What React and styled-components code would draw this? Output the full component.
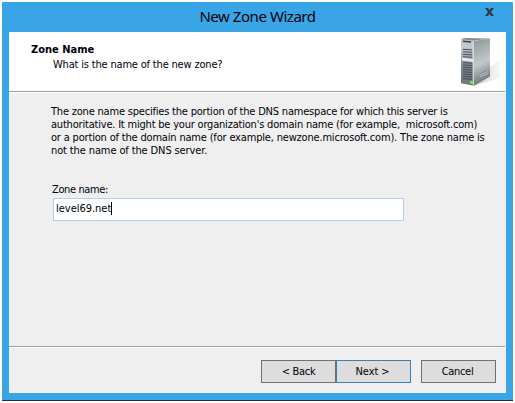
import React from "react";
import styled, { createGlobalStyle } from "styled-components";

const Global = createGlobalStyle`
  * { box-sizing: border-box; }
  body { margin: 0; background: #fff; overflow: hidden; }
`;

const Desktop = styled.div`
  width: 515px;
  height: 403px;
  padding: 2px;
  background: #fff;
`;

const Window = styled.div`
  display: flex;
  flex-direction: column;
  width: 511px;
  height: 399px;
  padding: 0 7px 7px;
  background: #39a5e7;
  border-bottom: 1px solid #2b3038;
  font-family: "DejaVu Sans Condensed", "DejaVu Sans", sans-serif;
  font-stretch: condensed;
  font-size: 11px;
  line-height: 13px;
  color: #000008;
`;

const TitleBar = styled.header`
  display: grid;
  grid-template-columns: 30px 1fr 30px;
  height: 30px;
  flex: none;
`;

const Title = styled.h1`
  grid-column: 2;
  margin: 0;
  padding-top: 4px;
  text-align: center;
  font: 400 15px/20px "Noto Sans", sans-serif;
  letter-spacing: -0.45px;
`;

const CloseButton = styled.button`
  display: flex;
  justify-content: flex-start;
  align-items: flex-start;
  padding: 6px 0 0 9px;
  border: 0;
  background: none;
`;

const Header = styled.section`
  display: flex;
  justify-content: space-between;
  height: 59px;
  flex: none;
  padding: 10px 4px 0 22px;
  background: #fff;
`;

const Divider = styled.div`
  height: 2px;
  flex: none;
  padding-right: 1px;
  background: linear-gradient(#a0a0a0 50%, #fff 50%) content-box, #efefef;

  &::before {
    content: "";
    display: block;
    height: 2px;
  }
`;

const Heading = styled.h2`
  margin: 0;
  font-size: 11px;
  line-height: 15px;
  font-weight: 700;
`;

const Line = styled.div`
  white-space: pre;
  letter-spacing: ${(p) => p.$track ?? -0.2}px;
`;

const Subheading = styled(Line)`
  padding-left: 22px;
  line-height: 15px;
`;

const IconSlot = styled.div`
  margin-top: -5px;
  height: 50px;
`;

const Body = styled.main`
  display: flex;
  flex-direction: column;
  height: 253px;
  flex: none;
  padding: 12px 0 0 42px;
  background: #efefef;
`;

const Label = styled(Line)`
  margin: 26px 0 0 1px;
`;

const Field = styled.div`
  display: flex;
  align-items: center;
  width: 351px;
  height: 23px;
  margin: 2px 0 0 2px;
  padding: 0 0 2px 2px;
  border: 1px solid #b5cfe7;
  background: #fff;
`;

const Caret = styled.span`
  width: 1px;
  height: 13px;
  background: #000;
`;

const Footer = styled.footer`
  display: flex;
  justify-content: flex-end;
  flex: 1;
  padding: 12px 10px 0 0;
  background: #efefef;
`;

const Button = styled.button`
  width: 75px;
  height: 23px;
  margin-left: ${(p) => p.$gap || 0}px;
  padding: 0 ${(p) => p.$nudge || 0}px 0 0;
  border: 1px solid ${(p) => (p.$primary ? "#3c7fb1" : "#707070")};
  background: #ddd;
  color: inherit;
  font: inherit;
  letter-spacing: ${(p) => p.$track ?? -0.3}px;
`;

const vents = (from, count, step, tone) =>
  Array.from({ length: count }, (_, i) => (
    <path key={i} d={`M3 ${from + i * step}l9 .5`} stroke={tone} strokeWidth="1" />
  ));

const ServerIcon = () => (
  <svg width="42" height="50" viewBox="0 0 42 50" fill="none">
    <defs>
      <linearGradient id="side" x1="13" y1="3" x2="30" y2="40" gradientUnits="userSpaceOnUse">
        <stop stopColor="#8e9699" />
        <stop offset=".35" stopColor="#aeb5b7" />
        <stop offset=".6" stopColor="#c3c8ca" />
        <stop offset="1" stopColor="#777f83" />
      </linearGradient>
      <linearGradient id="front" x1="0" y1="1" x2="0" y2="48" gradientUnits="userSpaceOnUse">
        <stop stopColor="#b9c2c6" />
        <stop offset=".2" stopColor="#c4cbd0" />
        <stop offset=".55" stopColor="#858e96" />
        <stop offset="1" stopColor="#6c757a" />
      </linearGradient>
      <linearGradient id="shadow" x1="22" y1="0" x2="40" y2="0" gradientUnits="userSpaceOnUse">
        <stop stopColor="#d8d8d8" />
        <stop offset=".5" stopColor="#ebebeb" />
        <stop offset="1" stopColor="#f8f8f8" />
      </linearGradient>
    </defs>
    <path d="M30 30L40.5 22V41L30 44L15 48.5Z" fill="url(#shadow)" />
    <path d="M13 4L30 1.5V39.5L14 48.7Z" fill="url(#side)" />
    <path d="M1 2.3L13 3.8L14 48.7L1 46.2Z" fill="url(#front)" />
    <path d="M1 2.3L4 1L30 1.5L13 3.8Z" fill="#858d90" />
    <path d="M13.3 4V48.4" stroke="#dfe4e5" />
    <path d="M3 4.3L11 5" stroke="#37464d" strokeWidth="1.4" />
    {vents(12.3, 4, 2.5, "#4c555b")}
    <path d="M2 20.5L13 22V25L2 23.5Z" fill="#e3e8ed" />
    {vents(25.7, 8, 2.3, "#444d53")}
    <path d="M10 44h3v2.5h-3z" fill="#72f22d" />
    <path d="M20 39l8-3.5M20 41l8-3.5M20 37l8-3.5" stroke="#7d8589" strokeWidth=".8" />
    <path d="M20 38l8-3.5M20 40l8-3.5" stroke="#cdd1d2" strokeWidth=".7" />
  </svg>
);

export default function App() {
  return (
    <Desktop>
      <Global />
      <Window>
        <TitleBar>
          <Title>New Zone Wizard</Title>
          <CloseButton aria-label="Close">
            <svg width="9" height="8" viewBox="0 0 9 8">
              <path d="M0 0h3l1.5 2.3L6 0h3L6 4l3 4H6L4.5 5.7 3 8H0l3-4z" fill="#343a40" />
            </svg>
          </CloseButton>
        </TitleBar>
        <Header>
          <div>
            <Heading>Zone Name</Heading>
            <Subheading $track={-0.18}>What is the name of the new zone?</Subheading>
          </div>
          <IconSlot>
            <ServerIcon />
          </IconSlot>
        </Header>
        <Divider />
        <Body>
          <Line>The zone name specifies the portion of the DNS namespace for which this server is</Line>
          <Line>authoritative. It might be your organization's domain name (for example,  microsoft.com)</Line>
          <Line $track={-0.18}>or a portion of the domain name (for example, newzone.microsoft.com). The zone name is</Line>
          <Line $track={-0.12}>not the name of the DNS server.</Line>
          <Label $track={-0.38}>Zone name:</Label>
          <Field>
            <Line $track={-0.02}>level69.net</Line>
            <Caret />
          </Field>
        </Body>
        <Divider />
        <Footer>
          <Button>&lt; Back</Button>
          <Button $primary $nudge={2} $track={-0.1}>Next &gt;</Button>
          <Button $gap={10} $nudge={2}>Cancel</Button>
        </Footer>
      </Window>
    </Desktop>
  );
}
